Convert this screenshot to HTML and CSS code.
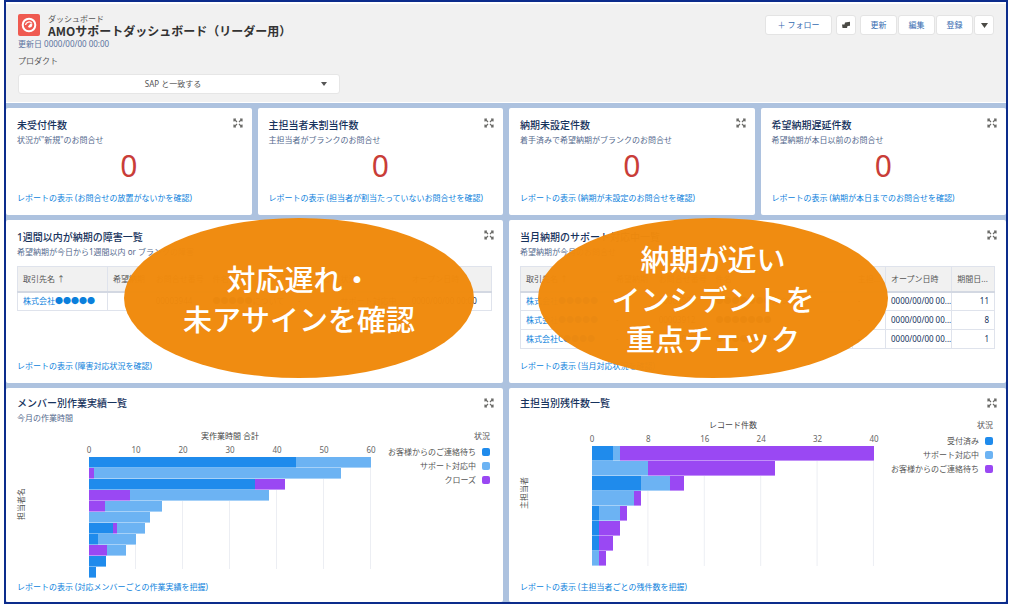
FILE: index.html
```html
<!DOCTYPE html>
<html lang="ja">
<head>
<meta charset="utf-8">
<meta name="viewport" content="width=device-width, initial-scale=1">
<title>AMOサポートダッシュボード</title>
<link rel="stylesheet" href="styles.css">
</head>
<body>
<svg class="defs" aria-hidden="true">
  <symbol id="expand" viewBox="0 0 10 10">
    <path d="M1 3.500V1h2M7 1h2v2.500M9 6.500V9H7M3 9H1V6.500M1.500 1.500L4 4M8.500 1.500L6 4M8.500 8.500L6 6M1.500 8.500L4 6" fill="none" stroke="currentColor" stroke-width="1.200"/>
  </symbol>
</svg>
<div class="frame">
  <header class="header">
    <div class="header-top">
      <svg class="logo" viewBox="0 0 22 22" aria-hidden="true">
        <rect width="22" height="22" rx="2" fill="#ef5a50"/>
        <circle cx="11" cy="11" r="6.300" fill="none" stroke="#fff" stroke-width="2"/>
        <path d="M7.500 11a3.600 3.600 0 0 1 6.500-1.500" fill="none" stroke="#fff" stroke-width="1.300"/>
        <path d="M10 12.500l2.500-3 2 1-1 2.500-2.500.8z" fill="#fff"/>
      </svg>
      <div class="heading">
        <p class="kind">ダッシュボード</p>
        <h1>AMOサポートダッシュボード（リーダー用）</h1>
      </div>
      <div class="actions">
        <button class="btn follow" type="button">＋ フォロー</button>
        <button class="btn small" type="button" aria-label="共有">
          <svg width="10" height="8" viewBox="0 0 10 8"><path d="M1 3.500h2.500L4 1.500 9 .8v4L6.500 5 6 7H1.500z" fill="#4b4a45"/></svg>
        </button>
        <div class="group">
          <button class="btn" type="button">更新</button>
          <button class="btn" type="button">編集</button>
          <button class="btn" type="button">登録</button>
          <button class="btn small" type="button" aria-label="その他">
            <svg width="7" height="5" viewBox="0 0 7 5"><path d="M0 0h7L3.500 5z" fill="#4b4a45"/></svg>
          </button>
        </div>
      </div>
    </div>
    <p class="updated">更新日 0000/00/00 00:00</p>
    <label class="filter-label" for="product">プロダクト</label>
    <div class="filter">
      <select id="product"><option>SAP と一致する</option></select>
      <svg class="caret" width="6" height="4" viewBox="0 0 6 4" aria-hidden="true"><path d="M0 0h6L3 4z" fill="#555"/></svg>
    </div>
  </header>

  <main class="board">
    <section class="card">
      <button class="expand" type="button" aria-label="拡大"><svg><use href="#expand"/></svg></button>
      <h2>未受付件数</h2><p class="sub">状況が"新規"のお問合せ</p>
      <p class="metric">0</p>
      <a class="report" href="#">レポートの表示 (お問合せの放置がないかを確認)</a>
    </section>
    <section class="card">
      <button class="expand" type="button" aria-label="拡大"><svg><use href="#expand"/></svg></button>
      <h2>主担当者未割当件数</h2><p class="sub">主担当者がブランクのお問合せ</p>
      <p class="metric">0</p>
      <a class="report" href="#">レポートの表示 (担当者が割当たっていないお問合せを確認)</a>
    </section>
    <section class="card">
      <button class="expand" type="button" aria-label="拡大"><svg><use href="#expand"/></svg></button>
      <h2>納期未設定件数</h2><p class="sub">着手済みで希望納期がブランクのお問合せ</p>
      <p class="metric">0</p>
      <a class="report" href="#">レポートの表示 (納期が未設定のお問合せを確認)</a>
    </section>
    <section class="card">
      <button class="expand" type="button" aria-label="拡大"><svg><use href="#expand"/></svg></button>
      <h2>希望納期遅延件数</h2><p class="sub">希望納期が本日以前のお問合せ</p>
      <p class="metric">0</p>
      <a class="report" href="#">レポートの表示 (納期が本日までのお問合せを確認)</a>
    </section>

    <section class="card wide list">
      <button class="expand" type="button" aria-label="拡大"><svg><use href="#expand"/></svg></button>
      <h2>1週間以内が納期の障害一覧</h2><p class="sub">希望納期が今日から1週間以内 or ブランクの障害</p>
      <table>
        <colgroup><col class="w19"><col class="w9"><col class="w12"><col class="w18"><col class="w9"><col><col class="w18"></colgroup>
        <thead><tr><th>取引先名 ↑</th><th>希望納期</th><th>お問合せ番号</th><th>件名</th><th>主担当者</th><th>状況</th><th>オープン日時</th></tr></thead>
        <tbody><tr><td><a href="#">株式会社●●●●●</a></td><td></td><td>00003944</td><td>●●●●●について</td><td>-</td><td>サポート対応中</td><td>0000/00/00 00:00</td></tr></tbody>
      </table>
      <a class="report" href="#">レポートの表示 (障害対応状況を確認)</a>
      <div class="callout late"><p>対応遅れ・<br>未アサインを確認</p></div>
    </section>
    <section class="card wide list">
      <button class="expand" type="button" aria-label="拡大"><svg><use href="#expand"/></svg></button>
      <h2>当月納期のサポート対応中一覧</h2><p class="sub">希望納期が今月のお問合せ</p>
      <table>
        <colgroup><col class="w19"><col class="w9"><col class="w12"><col><col class="w7"><col class="w14"><col class="w9"></colgroup>
        <thead><tr><th>取引先名 ↑</th><th>希望納期</th><th>お問合せ番号</th><th>件名</th><th>主担...</th><th>オープン日時</th><th>期間日...</th></tr></thead>
        <tbody>
          <tr><td><a href="#">株式会社●●●●●</a></td><td>-</td><td>00003901</td><td>●●●●●●●について</td><td>-</td><td>0000/00/00 00...</td><td class="num">11</td></tr>
          <tr><td><a href="#">株式会社●●●●●</a></td><td>-</td><td>00003912</td><td>●●●●●●●</td><td>-</td><td>0000/00/00 00...</td><td class="num">8</td></tr>
          <tr><td><a href="#">株式会社C●●●●</a></td><td>-</td><td>00003940</td><td>●●●●●●●の件</td><td>-</td><td>0000/00/00 00...</td><td class="num">1</td></tr>
        </tbody>
      </table>
      <a class="report" href="#">レポートの表示 (当月対応状況を確認)</a>
      <div class="callout near"><p>納期が近い<br>インシデントを<br>重点チェック</p></div>
    </section>

    <section class="card wide chart-card">
      <button class="expand" type="button" aria-label="拡大"><svg><use href="#expand"/></svg></button>
      <h2>メンバー別作業実績一覧</h2><p class="sub">今月の作業時間</p>
      <div class="chart">
        <p class="ylabel">担当者名</p>
        <div class="plot">
          <p class="axis-title">実作業時間 合計</p>
          <div class="ticks"><span>0</span><span>10</span><span>20</span><span>30</span><span>40</span><span>50</span><span>60</span></div>
          <div class="bars six">
            <div class="bar"><i class="b" style="width:73.400%"></i><i class="l" style="width:26.600%"></i></div>
            <div class="bar"><i class="p" style="width:1.600%"></i><i class="l" style="width:87.700%"></i></div>
            <div class="bar"><i class="b" style="width:58.700%"></i><i class="p" style="width:10.700%"></i></div>
            <div class="bar"><i class="p" style="width:14.700%"></i><i class="l" style="width:49%"></i></div>
            <div class="bar"><i class="p" style="width:5.800%"></i><i class="l" style="width:20%"></i></div>
            <div class="bar"><i class="l" style="width:21.500%"></i></div>
            <div class="bar"><i class="b" style="width:8.400%"></i><i class="p" style="width:1.500%"></i><i class="l" style="width:10%"></i></div>
            <div class="bar"><i class="b" style="width:3.200%"></i><i class="l" style="width:13.400%"></i></div>
            <div class="bar"><i class="p" style="width:6.500%"></i><i class="l" style="width:6.700%"></i></div>
            <div class="bar"><i class="b" style="width:6.100%"></i></div>
            <div class="bar"><i class="b" style="width:2.600%"></i></div>
          </div>
        </div>
        <div class="legend"><p>状況</p><ul><li>お客様からのご連絡待ち<i class="b"></i></li><li>サポート対応中<i class="l"></i></li><li>クローズ<i class="p"></i></li></ul></div>
      </div>
      <a class="report" href="#">レポートの表示 (対応メンバーごとの作業実績を把握)</a>
    </section>
    <section class="card wide chart-card">
      <button class="expand" type="button" aria-label="拡大"><svg><use href="#expand"/></svg></button>
      <h2>主担当別残件数一覧</h2>
      <div class="chart">
        <p class="ylabel">主担当者</p>
        <div class="plot">
          <p class="axis-title">レコード件数</p>
          <div class="ticks"><span>0</span><span>8</span><span>16</span><span>24</span><span>32</span><span>40</span></div>
          <div class="bars five">
            <div class="bar"><i class="b" style="width:7.500%"></i><i class="l" style="width:2.500%"></i><i class="p" style="width:90%"></i></div>
            <div class="bar"><i class="l" style="width:20%"></i><i class="p" style="width:45%"></i></div>
            <div class="bar"><i class="b" style="width:17.500%"></i><i class="l" style="width:10%"></i><i class="p" style="width:5%"></i></div>
            <div class="bar"><i class="l" style="width:15%"></i><i class="p" style="width:2.500%"></i></div>
            <div class="bar"><i class="b" style="width:2.500%"></i><i class="l" style="width:7.500%"></i><i class="p" style="width:2.500%"></i></div>
            <div class="bar"><i class="b" style="width:2.500%"></i><i class="p" style="width:7.500%"></i></div>
            <div class="bar"><i class="b" style="width:2.500%"></i><i class="p" style="width:5%"></i></div>
            <div class="bar"><i class="l" style="width:2.500%"></i><i class="p" style="width:2.500%"></i></div>
          </div>
        </div>
        <div class="legend"><p>状況</p><ul><li>受付済み<i class="b"></i></li><li>サポート対応中<i class="l"></i></li><li>お客様からのご連絡待ち<i class="p"></i></li></ul></div>
      </div>
      <a class="report" href="#">レポートの表示 (主担当者ごとの残件数を把握)</a>
    </section>
  </main>
</div>
</body>
</html>
```
FILE: styles.css
```css
* { box-sizing: border-box; }
body {
  margin: 0;
  background: #fff;
  color: #16325c;
  font: 8px/12px "Noto Sans", "Noto Sans CJK JP", sans-serif;
}
h1, h2, p, ul { margin: 0; padding: 0; }
ul { list-style: none; }
a { color: #0b7fdc; text-decoration: none; }
button, select { font: inherit; margin: 0; }
.defs { position: absolute; width: 0; height: 0; }

.frame {
  display: flex;
  flex-direction: column;
  min-height: 100vh;
  margin: 0 2px 0 4px;
  border: 2px solid #0c2c8c;
}

/* header */
.header {
  padding: 10px 12px 8px;
  background: #f1f1f1;
  border-top: 2px solid #fff;
  border-bottom: 1px solid #fff;
  color: #555;
}
.header-top { display: flex; align-items: flex-start; gap: 8px; }
.logo { width: 22px; height: 22px; }
.heading { flex: 1; }
.kind { line-height: 10px; }
h1 {
  font-family: "Noto Sans CJK JP", sans-serif;
  font-size: 12px;
  line-height: 14px;
  font-weight: 700;
  color: #333;
}
.updated { color: #5a739f; }
.filter-label { display: block; margin: 5px 0 7px; }
.filter { position: relative; max-width: 322px; }
select {
  display: block;
  width: 100%;
  height: 20px;
  padding: 0 12px 0 0;
  appearance: none;
  border: 1px solid #e6e6e6;
  border-radius: 3px;
  background: #fff;
  color: #555;
  text-align: center;
  text-align-last: center;
}
.caret { position: absolute; right: 13px; top: 8px; }
.actions { display: flex; gap: 4px; padding-top: 1px; }
.group { display: flex; gap: 1px; }
.btn {
  width: 37px;
  height: 20px;
  padding: 0;
  border: 1px solid #e4e4e4;
  border-radius: 3px;
  background: #fff;
  color: #356bb0;
}
.follow { width: 67px; }
.small { width: 20px; }
.btn svg { display: block; margin: auto; }

/* cards */
.board {
  flex: 1;
  display: grid;
  grid-template-columns: repeat(4, 1fr);
  grid-template-rows: auto auto 1fr;
  gap: 5px 6px;
  padding-top: 5px;
  background: #adc2df;
}
.card {
  position: relative;
  display: flex;
  flex-direction: column;
  min-width: 0;
  padding: 9px 11px 11px;
  border-radius: 2px;
  background: #fff;
}
.wide { grid-column: span 2; }
.list { min-height: 163px; }
.expand {
  position: absolute;
  top: 10px;
  right: 9px;
  width: 10px;
  height: 10px;
  padding: 0;
  border: 0;
  background: none;
  color: #6b6b68;
}
.expand svg { display: block; width: 10px; height: 10px; }
h2 { font-size: 10px; line-height: 16px; font-weight: 500; }
.sub { line-height: 14px; color: #54698d; }
.metric { font-size: 30px; line-height: 38px; text-align: center; color: #c93d38; }
.report { margin-top: auto; }
.metric + .report { margin-top: 7px; }

/* tables */
table {
  width: 100%;
  margin-top: 7px;
  table-layout: fixed;
  border-collapse: collapse;
}
th, td {
  height: 19px;
  padding: 0 5px;
  border: 1px solid #dfe3ec;
  overflow: hidden;
  white-space: nowrap;
  text-align: left;
  font-weight: 400;
}
th { height: 25px; background: #f1f1f1; color: #555; border-bottom: 2px solid #d3d8e2; }
.num { text-align: right; }
.w7 { width: 7%; }
.w9 { width: 9%; }
.w12 { width: 12%; }
.w14 { width: 14%; }
.w18 { width: 18%; }
.w19 { width: 19%; }

/* callouts over the lists */
.callout {
  position: absolute;
  z-index: 1;
  top: -2px;
  display: flex;
  align-items: center;
  justify-content: center;
  width: 350px;
  height: 160px;
  border-radius: 50%;
  background: rgba(240, 138, 12, 0.98);
  color: #fff;
  font-family: "Noto Sans CJK JP", sans-serif;
  font-size: 29px;
  line-height: 40px;
  font-weight: 500;
  text-align: center;
}
.late { left: 118px; }
.near { left: 29px; }

/* charts */
.chart-card { padding: 7px 11px 9px; }
.chart { display: grid; grid-template-columns: 72px 1fr 121px; }
.sub + .chart { margin-top: 5px; }
h2 + .chart { margin-top: 8px; }
.ylabel {
  align-self: center;
  justify-self: start;
  writing-mode: vertical-rl;
  text-orientation: sideways;
  transform: rotate(180deg);
  line-height: 8px;
  color: #555;
}
.axis-title { text-align: center; color: #444; }
.ticks { display: flex; justify-content: space-between; line-height: 15px; color: #666; }
.ticks span { display: flex; justify-content: center; width: 0; }
.bars { display: grid; background-repeat: repeat-x; }
.bars.six { background-image: linear-gradient(to left, #eceef3 1px, transparent 1px); background-size: calc(100% / 6) 112px; }
.bars.five { background-image: linear-gradient(to left, #eceef3 1px, transparent 1px); background-size: 20% 120px; }
.bar { display: flex; }
.six .bar { height: 11px; }
.five .bar { height: 15px; }
.bar i { border-bottom: 1px solid rgba(255, 255, 255, 0.4); }
.b { background: #1f8bec; }
.l { background: #6cb3f3; }
.p { background: #9a48f3; }
.legend { padding-right: 2px; text-align: right; color: #555; }
.legend ul { padding-top: 3px; }
.legend li { display: flex; align-items: center; justify-content: flex-end; gap: 6px; line-height: 14px; }
.legend li i { width: 8px; height: 8px; border-radius: 2px; }
```
